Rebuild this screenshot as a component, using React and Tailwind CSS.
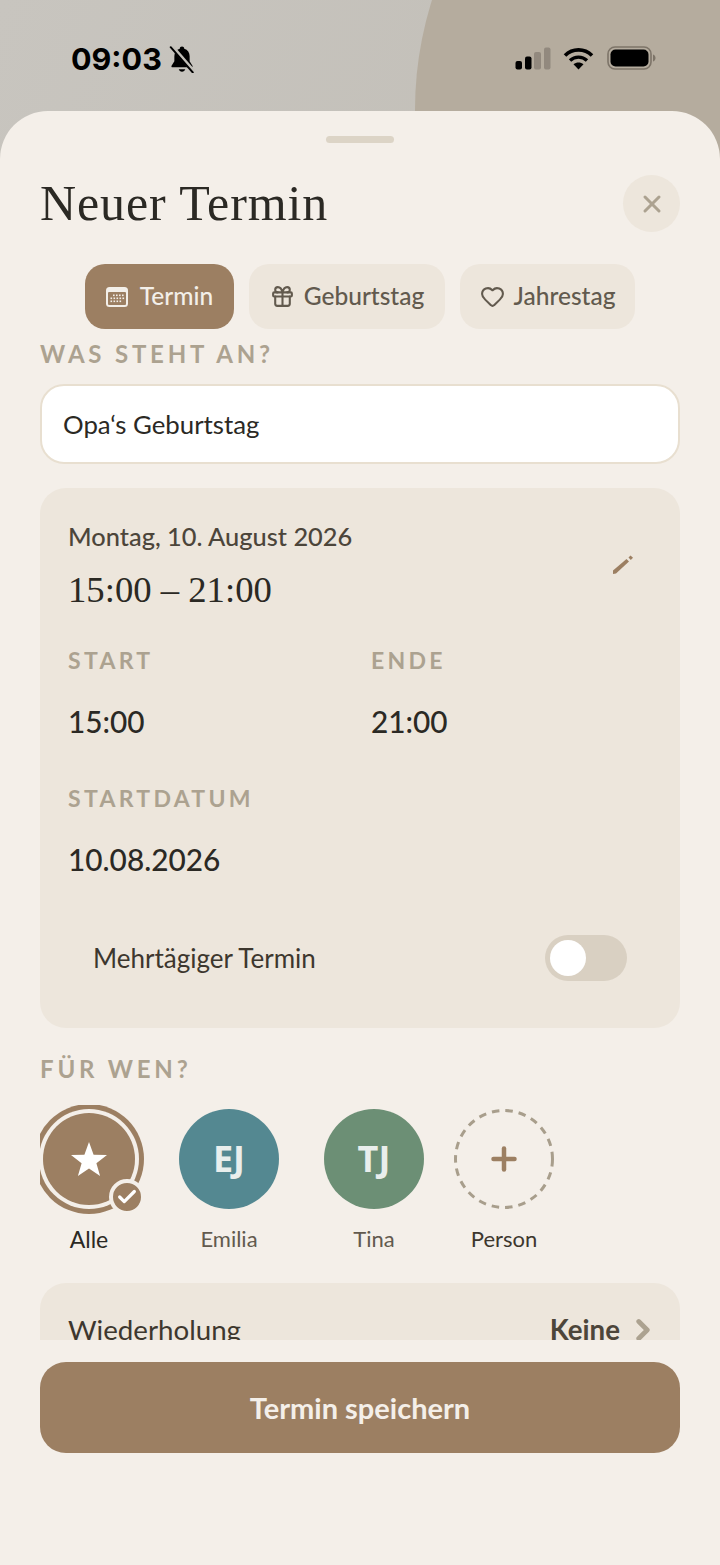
import React from "react";
import { Gift, Heart, X, Plus, ChevronRight, Check } from "lucide-react";

const sans = { fontFamily: "Lato, sans-serif" };

function BellOff() {
  return (
    <svg width="28" height="28" viewBox="0 0 26 26" fill="none">
      <path d="M13 1.500c1.200 0 2 .8 2.100 1.900 3.300.9 5 3.600 5 7.100v4.500l2.600 4.300c.4.700 0 1.400-.8 1.400H4.100c-.8 0-1.200-.7-.8-1.400L5.900 15V10.500c0-3.500 1.700-6.200 5-7.100.1-1.100.9-1.900 2.100-1.900z" fill="#000" />
      <path d="M10 22.500h6c-.4 1.500-1.500 2.300-3 2.300s-2.600-.8-3-2.300z" fill="#000" />
      <path d="M3.500 1.200 24 24.700" stroke="#c2bfb8" strokeWidth="3.600" />
      <path d="M2.500 2 23 25.500" stroke="#000" strokeWidth="1.800" strokeLinecap="round" />
    </svg>
  );
}

function StatusIcons() {
  return (
    <div className="flex items-center">
      <svg width="36" height="23" viewBox="0 0 36 23">
        <rect x="0.500" y="14" width="6.500" height="8.500" rx="2" fill="#000" />
        <rect x="10" y="9.500" width="6.500" height="13" rx="2" fill="#000" />
        <rect x="19" y="5" width="7" height="17.500" rx="2" fill="#92897e" />
        <rect x="29" y="0.500" width="6.500" height="22" rx="2" fill="#92897e" />
      </svg>
      <svg className="ml-[12px]" width="31" height="23" viewBox="0 0 31 23">
        <path d="M2 8.500C9.500 1 21.500 1 29 8.500" stroke="#000" strokeWidth="3.600" fill="none" />
        <path d="M7 13.500c4.800-4.500 12.200-4.500 17 0" stroke="#000" strokeWidth="3.400" fill="none" />
        <path d="M15.500 22.500 10.500 17.300c3-2.400 7-2.400 10 0z" fill="#000" />
      </svg>
      <svg className="ml-[13px]" width="49" height="24" viewBox="0 0 49 24">
        <rect x="1" y="1" width="43" height="22" rx="7" stroke="#7d7468" strokeWidth="1.600" fill="none" />
        <rect x="3.500" y="3.500" width="38" height="17" rx="5" fill="#000" />
        <path d="M46 8.500c1.800.6 2.500 2 2.500 3.500s-.7 2.900-2.500 3.500z" fill="#7d7468" />
      </svg>
    </div>
  );
}

function CalendarFill() {
  return (
    <svg width="22" height="20" viewBox="0 0 22 20">
      <rect x="0" y="0" width="22" height="20" rx="3.500" fill="#f3efe9" />
      <rect x="2" y="5" width="18" height="13" rx="1" fill="#9c7f62" />
      {[7, 10, 13, 16].map((x) => (
        <rect key={x} x={x} y="7.500" width="1.600" height="1.600" fill="#f3efe9" />
      ))}
      {[5, 8, 11, 14, 17].map((x) => (
        <rect key={x} x={x - 0.5} y="10.500" width="1.600" height="1.600" fill="#f3efe9" />
      ))}
      {[5, 8, 11, 14].map((x) => (
        <rect key={x} x={x - 0.5} y="13.500" width="1.600" height="1.600" fill="#f3efe9" />
      ))}
    </svg>
  );
}

function Pencil() {
  return (
    <svg width="24" height="22" viewBox="0 0 24 22">
      <path d="M2 21 2 17.500 15.500 6 18 8.500 5 20.500z" fill="#9c7f62" />
      <path d="M17.500 4.500 19.500 2.500 22 4.800 19.800 7z" fill="#9c7f62" />
    </svg>
  );
}

function Tab({ active, icon, label, className }) {
  return (
    <div
      className={`flex h-[65px] items-center justify-center rounded-[20px] text-[24.500px] font-medium ${active ? "bg-[#9c7f62] text-[#f3efe9]" : "bg-[#ede6dc] text-[#625a4e]"} ${className}`}
    >
      {icon}
      <span>{label}</span>
    </div>
  );
}

function SectionLabel({ children, className = "" }) {
  return (
    <div className={`h-[24px] text-[24px] leading-[24px] font-bold tracking-[3.800px] text-[#aca290] ${className}`}>
      {children}
    </div>
  );
}

function FieldLabel({ children, className = "" }) {
  return (
    <div className={`h-[24px] text-[23px] leading-[24px] font-bold tracking-[3.300px] text-[#aca290] ${className}`}>
      {children}
    </div>
  );
}

function TimeValue({ children }) {
  return <div className="mt-[32px] h-[36px] text-[29.800px] leading-[36px] font-medium">{children}</div>;
}

function Avatar({ initials, name, color, className }) {
  return (
    <div className={`flex w-[100px] shrink-0 flex-col items-center pt-[4px] ${className}`}>
      <div
        className={`flex h-[100px] w-[100px] items-center justify-center rounded-full text-[36px] font-bold text-[#e9eeec] ${color}`}
        style={{ fontFamily: "'Open Sans', sans-serif" }}
      >
        {initials}
      </div>
      <div className="mt-[16px] h-[28px] text-[22px] leading-[28px] text-[#625a4e]">{name}</div>
    </div>
  );
}

export default function App() {
  return (
    <div
      className="relative h-[1565px] w-[720px] overflow-hidden bg-gradient-to-br from-[#c8c5bf] to-[#bcb8b0] text-[#2b2924]"
      style={sans}
    >
      {/* circle behind the status bar */}
      <div className="absolute top-[-254px] left-[415px] h-[728px] w-[728px] rounded-full bg-[#b5ac9e]"></div>

      <div className="relative flex h-[111px] items-start justify-between pt-[41px] pr-[64px] pl-[71px]">
        <div className="flex items-center text-black">
          <span className="text-[30.500px] leading-[36px] font-bold" style={{ fontFamily: "Inter, sans-serif" }}>
            09:03
          </span>
          <span className="ml-[6px]">
            <BellOff />
          </span>
        </div>
        <div className="pt-[5px]">
          <StatusIcons />
        </div>
      </div>

      <div className="relative flex h-[1454px] flex-col rounded-t-[48px] bg-[#f4efe9]">
        <div className="h-[1229px] overflow-hidden">
          <div className="mx-auto mt-[25px] h-[7px] w-[68px] rounded-full bg-[#dcd4c6]"></div>

          <div className="mt-[32px] flex h-[57px] items-center justify-between pr-[40px] pl-[40px]">
            <h1
              className="text-[50px] leading-[57px] font-normal tracking-[0.900px]"
              style={{ fontFamily: "'Liberation Serif', serif" }}
            >
              Neuer Termin
            </h1>
            <div className="flex h-[57px] w-[57px] items-center justify-center rounded-full bg-[#ede6dc]">
              <X size={28} strokeWidth={2.6} color="#aca290" />
            </div>
          </div>

          <div className="mt-[32px] flex gap-[15px] pl-[85px]">
            <Tab active className="w-[149px]" label="Termin" icon={<span className="mr-[12px]"><CalendarFill /></span>} />
            <Tab className="w-[196px]" label="Geburtstag" icon={<Gift size={25} className="mr-[9px]" />} />
            <Tab className="w-[175px]" label="Jahrestag" icon={<Heart size={25} className="mr-[9px]" />} />
          </div>

          <div className="px-[40px]">
            <SectionLabel className="mt-[13px]">WAS STEHT AN?</SectionLabel>

            <div className="mt-[18px] flex h-[80px] items-center rounded-[24px] border-2 border-[#e8dfd0] bg-white pl-[21px] text-[25.800px]">
              Opa‘s Geburtstag
            </div>

            <div className="relative mt-[24px] h-[540px] rounded-[26px] bg-[#ede6dc] px-[28px] pt-[32px]">
              <div className="h-[32px] text-[25.400px] leading-[32px] font-medium text-[#4c453a]">Montag, 10. August 2026</div>
              <div className="mt-[16px] h-[44px] text-[36.700px] leading-[44px]" style={{ fontFamily: "'Liberation Serif', serif" }}>
                15:00 – 21:00
              </div>
              <div className="absolute top-[65px] right-[45px]">
                <Pencil />
              </div>

              <div className="mt-[36px] grid grid-cols-[303px_1fr]">
                <div>
                  <FieldLabel>START</FieldLabel>
                  <TimeValue>15:00</TimeValue>
                </div>
                <div>
                  <FieldLabel>ENDE</FieldLabel>
                  <TimeValue>21:00</TimeValue>
                </div>
              </div>

              <FieldLabel className="mt-[46px]">STARTDATUM</FieldLabel>
              <TimeValue>10.08.2026</TimeValue>

              <div className="mt-[57px] flex h-[46px] items-center justify-between pr-[25px] pl-[25px]">
                <span className="text-[26px] text-[#3d372e]">Mehrtägiger Termin</span>
                <div className="flex h-[46px] w-[82px] items-center rounded-full bg-[#d9d0c2] pl-[5px]">
                  <div className="h-[36px] w-[36px] rounded-full bg-white"></div>
                </div>
              </div>
            </div>

            <SectionLabel className="mt-[29px]">FÜR WEN?</SectionLabel>
          </div>

          <div className="mt-[24px] ml-[40px] flex h-[148px] overflow-hidden">
            <div className="flex w-[98px] shrink-0 flex-col items-center pt-[8px]">
              <div className="relative flex h-[92px] w-[92px] shrink-0 items-center justify-center rounded-full bg-[#9c7f62] shadow-[0_0_0_4px_#f4efe9,0_0_0_9px_#9c7f62]">
                <svg width="36" height="34" viewBox="0 0 36 34">
                  <path d="M18 0 22.600 12.800 36 13 25.400 21.300 29.100 34 18 26.500 6.900 34 10.600 21.300 0 13 13.400 12.800z" fill="#fff" />
                </svg>
                <div className="absolute right-[-10px] bottom-[-10px] flex h-[36px] w-[36px] items-center justify-center rounded-full border-[4px] border-[#f4efe9] bg-[#9c7f62]">
                  <Check size={22} color="#fff" strokeWidth={3.5} />
                </div>
              </div>
              <div className="mt-[20px] h-[28px] text-[23px] leading-[28px]">Alle</div>
            </div>
            <Avatar className="ml-[41px]" initials="EJ" name="Emilia" color="bg-[#548891]" />
            <Avatar className="ml-[45px]" initials="TJ" name="Tina" color="bg-[#6c8f75]" />
            <div className="ml-[30px] flex w-[100px] shrink-0 flex-col items-center pt-[4px]">
              <div className="relative flex h-[100px] w-[100px] items-center justify-center">
                <svg className="absolute inset-0" width="100" height="100" viewBox="0 0 100 100">
                  <circle cx="50" cy="50" r="48.500" fill="none" stroke="#a89e8c" strokeWidth="3" strokeDasharray="7.500 6" />
                </svg>
                <Plus size={36} color="#9c7f62" strokeWidth={3} />
              </div>
              <div className="mt-[16px] h-[28px] text-[22px] leading-[28px] text-[#3d372e]">Person</div>
            </div>
          </div>

          <div className="mx-[40px] mt-[30px] flex h-[94px] items-center justify-between rounded-[26px] bg-[#ede6dc] pr-[20px] pl-[28px]">
            <span className="text-[27.700px] text-[#3d372e]">Wiederholung</span>
            <div className="flex items-center">
              <span className="text-[27.700px] font-bold text-[#4c453a]">Keine</span>
              <ChevronRight size={34} color="#aca290" strokeWidth={3.4} className="ml-[6px]" />
            </div>
          </div>
        </div>

        <div className="px-[40px] pt-[22px]">
          <div className="flex h-[91px] items-center justify-center rounded-[26px] bg-[#9c7f62] text-[29px] font-bold text-[#f4efe9]">
            Termin speichern
          </div>
        </div>
      </div>
    </div>
  );
}
